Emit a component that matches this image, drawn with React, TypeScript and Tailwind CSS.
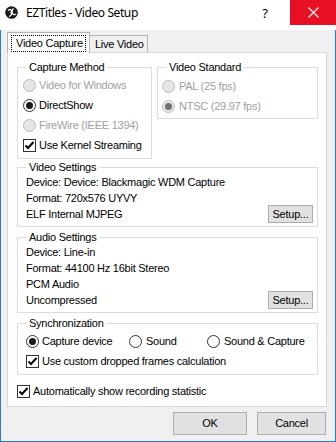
import React from "react";

const Radio = ({ checked, disabled }: { checked?: boolean; disabled?: boolean }) => (
  <div
    className={
      "w-[13px] h-[13px] rounded-full border flex items-center justify-center shrink-0 " +
      (disabled ? "border-[#bcbcbc] bg-[#e6e6e6]" : "border-[#333333] bg-white")
    }
  >
    {checked && (
      <div className={"w-[7px] h-[7px] rounded-full " + (disabled ? "bg-[#707070]" : "bg-[#1a1a1a]")} />
    )}
  </div>
);

const Check = () => (
  <div className="w-[13px] h-[13px] border border-[#333333] bg-white shrink-0 flex items-center justify-center">
    <svg width="11" height="11" viewBox="0 0 11 11">
      <polyline points="1.5,5.5 4,8 9.5,2" fill="none" stroke="#000" strokeWidth="2" />
    </svg>
  </div>
);

const Group = ({
  label,
  className,
  children,
}: {
  label: string;
  className: string;
  children?: React.ReactNode;
}) => (
  <div className={"relative border border-[#dcdcdc] " + className}>
    <div className="absolute left-[8px] top-[-8px] px-[3px] bg-white leading-[14px]">{label}</div>
    {children}
  </div>
);

export default function App() {
  return (
    <div className="w-[336px] h-[442px] flex flex-col bg-[#f0f0f0] text-[11px] tracking-[-0.25px] text-black font-['Liberation_Sans',Arial,sans-serif]">
      {/* title bar */}
      <div className="h-[30px] bg-white flex items-start shrink-0">
        <div className="pl-[5px] pt-[6px]">
          <svg width="13" height="13" viewBox="0 0 13 13">
            <circle cx="6.5" cy="6.5" r="6.3" fill="#1a1a1a" />
            <path d="M3 4.5 Q6 2 7 6 Q8 10 11 8" stroke="#fff" strokeWidth="1.3" fill="none" />
            <path d="M8.5 2.5 Q6 5 6.5 7 Q7 9.5 4 10.5" stroke="#fff" strokeWidth="1.3" fill="none" />
            <circle cx="6.5" cy="6.5" r="1.1" fill="#fff" />
          </svg>
        </div>
        <div className="pl-[8px] pt-[4px] text-[12px] tracking-[-0.4px] font-['Noto_Sans',sans-serif] leading-[18px]">
          EZTitles - Video Setup
        </div>
        <div className="ml-auto mr-[22px] pt-[4px] text-[13px] tracking-normal font-['Noto_Sans',sans-serif] leading-[18px]">
          ?
        </div>
        <div className="w-[46px] h-[25px] bg-[#e81123] flex items-center justify-center">
          <svg width="11" height="11" viewBox="0 0 11 11">
            <path d="M0.5 0.5 L10.5 10.5 M10.5 0.5 L0.5 10.5" stroke="#fff" strokeWidth="1.1" />
          </svg>
        </div>
      </div>

      {/* body */}
      <div className="flex-1 flex flex-col border-x border-b border-[#2a7ad2]">
        {/* tabs */}
        <div className="h-[22px] flex items-end pl-[6px] shrink-0">
          <div className="relative z-10 w-[83px] h-[21px] mb-[-1px] bg-white border-t border-x border-[#b4b4b4] px-[3px] pt-[2px]">
            <div className="h-[17px] border border-dotted border-black flex items-center pl-[4px]">Video Capture</div>
          </div>
          <div className="ml-[-1px] w-[59px] h-[17px] border-t border-x border-[#b4b4b4] flex items-center pl-[5px]">
            Live Video
          </div>
        </div>

        {/* panel */}
        <div className="ml-[6px] mr-[8px] h-[355px] bg-white border border-[#d9d9d9] pl-[9px] pr-[8px] pt-[14px] flex flex-col">
          <div className="flex gap-[5px] items-start">
            <Group label="Capture Method" className="w-[135px] h-[92px] pt-[7px] pl-[5px]">
              <div className="h-[20px] flex items-center gap-[3px] text-[#a0a0a0]">
                <Radio disabled />
                <span>Video for Windows</span>
              </div>
              <div className="h-[20px] flex items-center gap-[3px]">
                <Radio checked />
                <span>DirectShow</span>
              </div>
              <div className="h-[20px] flex items-center gap-[3px] text-[#a0a0a0]">
                <Radio disabled />
                <span>FireWire (IEEE 1394)</span>
              </div>
              <div className="h-[20px] flex items-center gap-[3px]">
                <Check />
                <span>Use Kernel Streaming</span>
              </div>
            </Group>
            <Group label="Video Standard" className="flex-1 h-[52px] pt-[8px] pl-[4px]">
              <div className="h-[20px] flex items-center gap-[4px] text-[#a0a0a0]">
                <Radio disabled />
                <span>PAL (25 fps)</span>
              </div>
              <div className="h-[20px] flex items-center gap-[4px] text-[#a0a0a0]">
                <Radio disabled checked />
                <span>NTSC (29.97 fps)</span>
              </div>
            </Group>
          </div>

          <Group label="Video Settings" className="mt-[8px] h-[60px] pl-[8px] pt-[6px] pr-[4px] flex items-end justify-between pb-[3px]">
            <div className="flex flex-col self-start">
              <div className="h-[16px] flex items-center">Device: Device: Blackmagic WDM Capture</div>
              <div className="h-[16px] flex items-center">Format: 720x576 UYVY</div>
              <div className="h-[17px] flex items-center">ELF Internal MJPEG</div>
            </div>
            <div className="w-[45px] h-[18px] bg-[#e1e1e1] border border-[#adadad] flex items-center justify-center">
              Setup...
            </div>
          </Group>

          <Group label="Audio Settings" className="mt-[10px] h-[76px] pl-[8px] pt-[6px] pr-[4px] flex items-end justify-between pb-[3px]">
            <div className="flex flex-col self-start">
              <div className="h-[16px] flex items-center">Device: Line-in</div>
              <div className="h-[16px] flex items-center">Format: 44100 Hz 16bit Stereo</div>
              <div className="h-[16px] flex items-center">PCM Audio</div>
              <div className="h-[17px] flex items-center">Uncompressed</div>
            </div>
            <div className="w-[45px] h-[18px] bg-[#e1e1e1] border border-[#adadad] flex items-center justify-center">
              Setup...
            </div>
          </Group>

          <Group label="Synchronization" className="mt-[10px] h-[52px] pl-[8px] pt-[7px]">
            <div className="h-[20px] flex items-center">
              <div className="w-[103px] flex items-center gap-[3px]">
                <Radio checked />
                <span>Capture device</span>
              </div>
              <div className="w-[78px] flex items-center gap-[4px]">
                <Radio />
                <span>Sound</span>
              </div>
              <div className="flex items-center gap-[4px]">
                <Radio />
                <span>Sound &amp; Capture</span>
              </div>
            </div>
            <div className="h-[20px] flex items-center gap-[3px]">
              <Check />
              <span>Use custom dropped frames calculation</span>
            </div>
          </Group>

          <div className="mt-[6px] h-[20px] flex items-center gap-[3px]">
            <Check />
            <span>Automatically show recording statistic</span>
          </div>
        </div>

        {/* buttons */}
        <div className="flex justify-end gap-[10px] pr-[9px] pt-[5px]">
          <div className="w-[74px] h-[23px] bg-[#e1e1e1] border border-[#adadad] flex items-center justify-center">OK</div>
          <div className="w-[69px] h-[23px] bg-[#e1e1e1] border border-[#adadad] flex items-center justify-center">Cancel</div>
        </div>
      </div>
    </div>
  );
}
